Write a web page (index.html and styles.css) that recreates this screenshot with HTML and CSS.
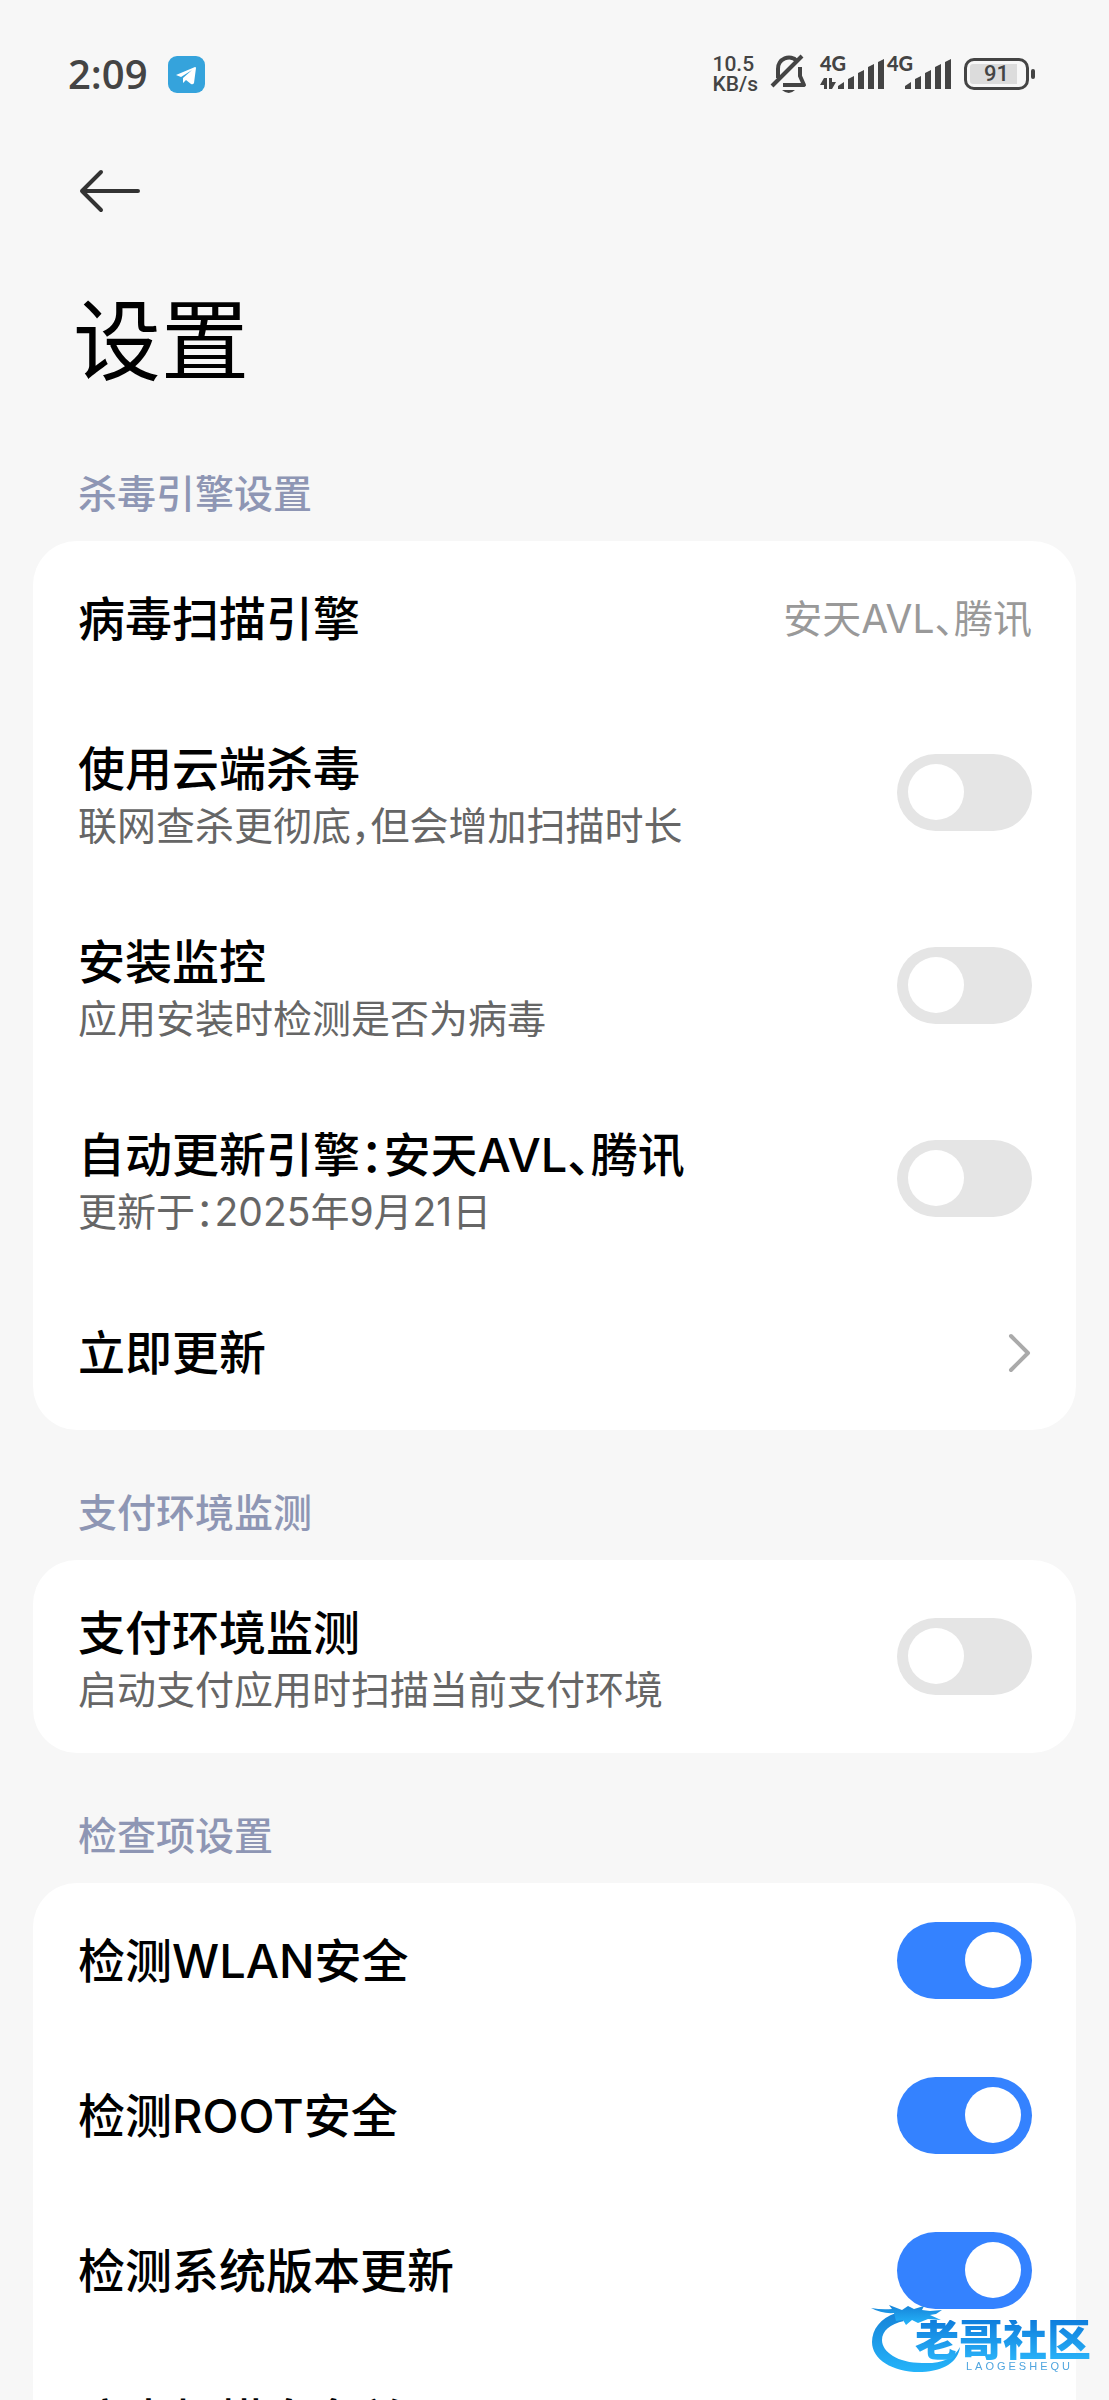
FILE: index.html
```html
<!DOCTYPE html>
<html lang="zh-CN">
<head>
    <meta charset="UTF-8">
    <meta name="viewport" content="width=device-width, initial-scale=1.0">
    <title>设置</title>
    <link rel="stylesheet" href="styles.css">
</head>
<body>
    <div class="status-bar">
        <div class="status-left">
            <span class="clock">2:09</span>
            <svg class="telegram" viewBox="0 0 37 37" aria-hidden="true">
                <rect width="37" height="37" rx="9" fill="#35a3dc"/>
                <path d="M8 19 27 11Q28 11 28 12L26 27Q25 29 23 28L18 24 15 27V22L24 14 13 21Z" fill="#fff"/>
            </svg>
        </div>
        <div class="status-right">
            <div class="net-speed"><span>10.5</span><span>KB/s</span></div>
            <svg class="bell" viewBox="0 0 38 40" aria-hidden="true">
                <g fill="none" stroke="#444" stroke-width="4" stroke-linejoin="round">
                    <path d="M8 24V15A11 11 0 0 1 27 7"/>
                    <path d="M30 13V22L34 31H13"/>
                    <path d="M2 32 32 2"/>
                </g>
                <path d="M12 36H25Q19 42 12 36Z" fill="#444"/>
            </svg>
            <div class="signal">
                <span class="signal-type">4G</span>
                <svg class="signal-bars" viewBox="0 0 65 34" fill="#444" aria-hidden="true">
                    <path d="M0 28 4 21H7V32H4V28ZM9 21H12V25H16L12 32H9Z"/>
                    <path d="M18 32V29L24 25V32ZM28 32V22L34 19V32ZM38 32V16L44 13V32ZM48 32V10L54 7V32ZM58 32V5L64 2V32Z"/>
                </svg>
            </div>
            <div class="signal">
                <span class="signal-type">4G</span>
                <svg class="signal-bars" viewBox="0 0 65 34" fill="#444" aria-hidden="true">
                    <path d="M18 32V29L24 25V32ZM28 32V22L34 19V32ZM38 32V16L44 13V32ZM48 32V10L54 7V32ZM58 32V5L64 2V32Z"/>
                </svg>
            </div>
            <div class="battery"><span class="battery-level">91</span></div>
        </div>
    </div>

    <header>
        <button type="button" class="back" aria-label="返回">
            <svg viewBox="0 0 62 44" aria-hidden="true">
                <path d="M22 3 3 22 22 41M3 22H59" fill="none" stroke="#333" stroke-width="4" stroke-linecap="round" stroke-linejoin="round"/>
            </svg>
        </button>
        <h1>设置</h1>
    </header>

    <main>
        <section>
            <h2>杀毒引擎设置</h2>
            <div class="card">
                <a class="row" href="#engine">
                    <span class="title">病毒扫描引擎</span>
                    <span class="value">安天AVL、腾讯</span>
                </a>
                <label class="row tall">
                    <span class="text">
                        <span class="title">使用云端杀毒</span>
                        <span class="desc">联网查杀更彻底，但会增加扫描时长</span>
                    </span>
                    <input type="checkbox" class="switch">
                </label>
                <label class="row tall">
                    <span class="text">
                        <span class="title">安装监控</span>
                        <span class="desc">应用安装时检测是否为病毒</span>
                    </span>
                    <input type="checkbox" class="switch">
                </label>
                <label class="row tall">
                    <span class="text">
                        <span class="title">自动更新引擎：安天AVL、腾讯</span>
                        <span class="desc">更新于：2025年9月21日</span>
                    </span>
                    <input type="checkbox" class="switch">
                </label>
                <a class="row" href="#update">
                    <span class="title">立即更新</span>
                    <svg class="chevron" viewBox="0 0 24 40" aria-hidden="true">
                        <path d="M3 3 20 20 3 37" fill="none" stroke="#aaa" stroke-width="4" stroke-linecap="round" stroke-linejoin="round"/>
                    </svg>
                </a>
            </div>
        </section>

        <section>
            <h2>支付环境监测</h2>
            <div class="card">
                <label class="row tall">
                    <span class="text">
                        <span class="title">支付环境监测</span>
                        <span class="desc">启动支付应用时扫描当前支付环境</span>
                    </span>
                    <input type="checkbox" class="switch">
                </label>
            </div>
        </section>

        <section>
            <h2>检查项设置</h2>
            <div class="card">
                <label class="row">
                    <span class="title">检测WLAN安全</span>
                    <input type="checkbox" class="switch" checked>
                </label>
                <label class="row">
                    <span class="title">检测ROOT安全</span>
                    <input type="checkbox" class="switch" checked>
                </label>
                <label class="row">
                    <span class="title">检测系统版本更新</span>
                    <input type="checkbox" class="switch" checked>
                </label>
                <a class="row tall" href="#whitelist">
                    <span class="text">
                        <span class="title">病毒扫描白名单</span>
                    </span>
                </a>
            </div>
        </section>
    </main>

    <div class="watermark">
        <svg class="dragon" viewBox="0 0 96 72" aria-hidden="true">
            <defs>
                <linearGradient id="dragonFill" x1="0" y1="0" x2="0" y2="1">
                    <stop offset="0" stop-color="#1683d8"/>
                    <stop offset="1" stop-color="#25b4fa"/>
                </linearGradient>
            </defs>
            <g fill="url(#dragonFill)">
                <path d="M26 11C10 16 2 28 2 40C2 58 24 71 52 70C74 69 88 60 90 45C84 57 70 62 52 61C28 61 12 50 12 38C12 29 20 22 34 19Z"/>
                <path d="M1 6Q12 8 22 7L19 3 32 8 38 4 44 7 54 4 52 8 60 9 72 8 66 12 60 13 71 18 58 17 48 21 42 18 36 23 33 18 26 19 24 11Q12 12 1 6Z"/>
            </g>
        </svg>
        <div class="brand">
            <span class="brand-name">老哥社区</span>
            <span class="brand-latin">LAOGESHEQU</span>
        </div>
    </div>
</body>
</html>
```

FILE: styles.css
```css
* {
    box-sizing: border-box;
}
body {
    margin: 0;
    height: 100vh;
    overflow: hidden;
    background-color: #f7f7f7;
    color: #000;
    font-family: Inter, "Noto Sans CJK SC", sans-serif;
    font-feature-settings: "halt";
}
.status-bar {
    display: flex;
    justify-content: space-between;
    align-items: center;
    height: 148px;
    padding: 0 73px 0 68px;
    color: #444;
}
.status-left,
.status-right {
    display: flex;
    align-items: center;
}
.status-left {
    gap: 20px;
}
.status-right {
    gap: 12px;
}
.clock {
    font-family: "Open Sans", sans-serif;
    font-size: 40px;
    font-weight: 600;
    line-height: 48px;
}
.telegram {
    width: 37px;
    height: 37px;
}
.net-speed {
    display: flex;
    flex-direction: column;
    font-family: Roboto, sans-serif;
    font-size: 21px;
    font-weight: 500;
    line-height: 20px;
}
.bell {
    width: 38px;
    height: 40px;
}
.signal {
    position: relative;
    display: flex;
    height: 34px;
}
.signal-type {
    position: absolute;
    top: -4px;
    left: 0;
    font-family: Lato, sans-serif;
    font-size: 20px;
    font-weight: 900;
    line-height: 20px;
}
.signal-bars {
    width: 65px;
    height: 34px;
}
.signal + .signal {
    margin-left: -10px;
}
.battery {
    position: relative;
    width: 65px;
    height: 32px;
    padding: 3px;
    border: 3px solid #444;
    border-radius: 10px;
    margin-right: 7px;
}
.battery::after {
    content: "";
    position: absolute;
    top: 8px;
    right: -9px;
    width: 4px;
    height: 10px;
    border-radius: 2px;
    background-color: #444;
}
.battery-level {
    display: block;
    border-radius: 3px;
    background: linear-gradient(to right, #dcdcdc 88%, transparent 88%);
    font-family: Roboto, sans-serif;
    font-size: 22px;
    font-weight: 500;
    line-height: 20px;
    text-align: center;
}
header {
    padding: 21px 73px 0;
}
.back {
    display: block;
    padding: 0;
    border: none;
    margin-left: 6px;
    background: none;
    cursor: pointer;
}
.back svg {
    display: block;
    width: 62px;
    height: 44px;
}
h1 {
    margin: 76px 0 0;
    font-size: 88px;
    font-weight: 400;
    line-height: 104px;
}
section {
    padding: 0 33px;
}
h2 {
    height: 130px;
    padding: 63px 45px 0;
    margin: 0;
    color: #8e96b4;
    font-size: 39px;
    font-weight: 500;
    line-height: 40px;
}
section:first-child h2 {
    height: 148px;
    padding-top: 81px;
}
.card {
    border-radius: 44px;
    background-color: #fff;
}
.row {
    display: flex;
    justify-content: space-between;
    align-items: center;
    height: 155px;
    padding: 0 44px 0 45px;
    color: inherit;
    text-decoration: none;
    cursor: pointer;
}
.row.tall {
    height: 193px;
}
.text {
    display: flex;
    flex-direction: column;
    min-height: 120px;
    padding-top: 6px;
}
.title {
    font-size: 47px;
    font-weight: 500;
    line-height: 60px;
}
.desc {
    color: #666;
    font-size: 39px;
    line-height: 54px;
}
.value {
    color: #999;
    font-size: 39px;
    line-height: 54px;
}
.chevron {
    width: 24px;
    height: 40px;
}
.switch {
    appearance: none;
    flex: none;
    width: 135px;
    height: 77px;
    padding: 10px 11px;
    border-radius: 39px;
    margin: 0;
    background-color: #e5e5e5;
    cursor: pointer;
}
.switch::before {
    content: "";
    display: block;
    width: 56px;
    height: 56px;
    border-radius: 50%;
    background-color: #fff;
}
.switch:checked {
    background-color: #3482ff;
}
.switch:checked::before {
    margin-left: auto;
}
.watermark {
    position: fixed;
    right: 18px;
    bottom: 26px;
    display: flex;
}
.dragon {
    width: 96px;
    height: 72px;
    margin-right: -51px;
}
.brand {
    display: flex;
    flex-direction: column;
    align-items: flex-end;
    padding-top: 18px;
}
.brand-name {
    background: linear-gradient(#0f7ddc, #29b2f8);
    background-clip: text;
    color: transparent;
    font-size: 44px;
    font-weight: 900;
    line-height: 40px;
}
.brand-latin {
    padding-right: 18px;
    color: #4fa5df;
    font-family: "Liberation Sans", sans-serif;
    font-size: 11px;
    letter-spacing: 3px;
    line-height: 12px;
}
```
